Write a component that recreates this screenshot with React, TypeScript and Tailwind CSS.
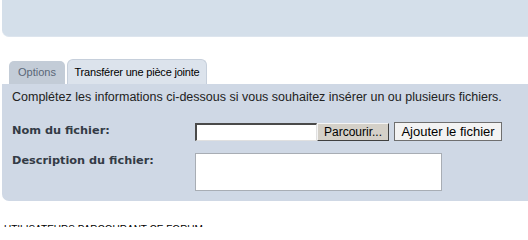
import React from 'react';

export default function App() {
  return (
    <div className="w-[528px] h-[227px] overflow-hidden bg-white">
      <div className="w-[545px] flex flex-col">
        {/* top panel (cut off) */}
        <div className="ml-[2px] h-[37px] bg-[#d4dfea] rounded-b-[7px] border-b border-[#dde5ee]" />

        {/* tabs */}
        <div className="mt-[22px] pl-[9px] flex items-end gap-[2px] h-[25px] font-['Liberation_Sans',Arial,sans-serif] text-[11px]">
          <div className="w-[56px] h-[23px] flex items-center justify-center rounded-t-[5px] bg-[#c3ccd7] text-[#5a6777]">
            Options
          </div>
          <div className="w-[140px] h-[25px] flex items-center justify-center rounded-t-[6px] bg-[#dce3ec] border border-b-0 border-[#c6cfdb] text-black tracking-[-0.2px]">
            Transférer une pièce jointe
          </div>
        </div>

        {/* attachment panel */}
        <div className="ml-[2px] h-[117px] bg-[#cfd8e5] rounded-bl-[7px] pl-[10px] pt-[6px] flex flex-col">
          <p className="text-[12.5px] leading-[15px] text-[#222] font-['Liberation_Sans',Arial,sans-serif]">
            Complétez les informations ci-dessous si vous souhaitez insérer un ou plusieurs fichiers.
          </p>

          <div className="mt-[17px] flex items-center">
            <label className="w-[183px] font-['DejaVu_Sans',Verdana,sans-serif] font-bold text-[11.3px] text-[#333b45]">
              Nom du fichier:
            </label>
            <div className="w-[122px] h-[18px] bg-white border-t-2 border-l-2 border-t-[#4a4a4a] border-l-[#4a4a4a] border-b border-r border-b-[#e0e0e0] border-r-[#e0e0e0]" />
            <button className="w-[72px] h-[18px] bg-[#d4d0c8] border border-t-[#f4f4f4] border-l-[#f4f4f4] border-b-[#404040] border-r-[#404040] text-[12px] leading-none text-black font-['Liberation_Sans',Arial,sans-serif]">
              Parcourir...
            </button>
            <button className="ml-[5px] w-[108px] h-[19px] bg-[#f3f3f3] border border-[#6f6f6f] text-[13px] leading-none text-black font-['Liberation_Sans',Arial,sans-serif]">
              Ajouter le fichier
            </button>
          </div>

          <div className="mt-[12px] flex items-start">
            <label className="w-[183px] font-['DejaVu_Sans',Verdana,sans-serif] font-bold text-[11.3px] text-[#333b45]">
              Description du fichier:
            </label>
            <div className="w-[247px] h-[38px] bg-white border border-[#a8adb4]" />
          </div>
        </div>

        <div className="mt-[23px] pl-[4px] text-[10px] leading-[12px] text-black font-['Liberation_Sans',Arial,sans-serif] uppercase">
          Utilisateurs parcourant ce forum
        </div>
      </div>
    </div>
  );
}
